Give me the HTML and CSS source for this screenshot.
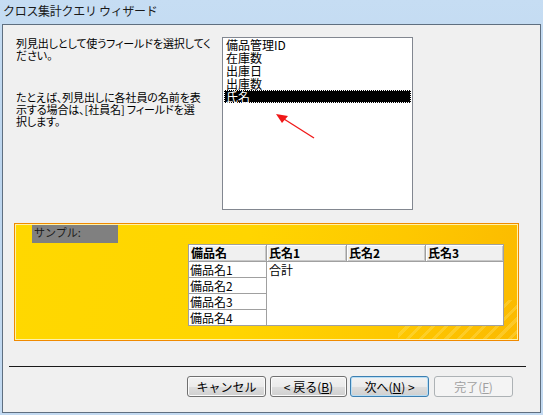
FILE: index.html
```html
<!DOCTYPE html>
<html lang="ja">
<head>
<meta charset="utf-8">
<title>クロス集計クエリ ウィザード</title>
<link rel="stylesheet" href="styles.css">
</head>
<body>
<div class="window">
  <div class="titlebar">クロス集計クエリ ウィザード</div>
  <div class="client">
    <div class="top">
      <div class="desc">
        <p class="para">列見出しとして使うフィールドを選択してく<br>ださい。</p>
        <p class="para para2">たとえば、列見出しに各社員の名前を表<br>示する場合は、[社員名] フィールドを選<br>択します。</p>
      </div>
      <div class="listbox">
        <div class="item">備品管理ID</div>
        <div class="item">在庫数</div>
        <div class="item">出庫日</div>
        <div class="item">出庫数</div>
        <div class="item selected">氏名</div>
        <svg class="arrow" width="50" height="34" viewBox="0 0 50 34">
          <line x1="46" y1="28" x2="16" y2="9" stroke="#f01818" stroke-width="1.3"/>
          <polygon points="8,4 20,6 14,13" fill="#f01818"/>
        </svg>
      </div>
    </div>
    <div class="sample">
      <div class="label">サンプル:</div>
      <div class="tbl">
        <div class="hd">備品名</div>
        <div class="hd">氏名1</div>
        <div class="hd">氏名2</div>
        <div class="hd">氏名3</div>
        <div class="cell">備品名1</div>
        <div class="body">合計</div>
        <div class="cell">備品名2</div>
        <div class="cell">備品名3</div>
        <div class="cell">備品名4</div>
      </div>
    </div>
    <div class="sep"></div>
    <div class="buttons">
      <button class="btn">キャンセル</button>
      <button class="btn w77">&lt; 戻る(<u>B</u>)</button>
      <button class="btn focus">次へ(<u>N</u>) &gt;</button>
      <button class="btn disabled gap5" disabled>完了(<u>F</u>)</button>
    </div>
  </div>
</div>
</body>
</html>
```

FILE: styles.css
```css
* { box-sizing: border-box; }
html, body {
  margin: 0;
  padding: 0;
}
body {
  width: 543px;
  height: 415px;
  overflow: hidden;
  font-family: "Noto Sans CJK JP", "Noto Sans", sans-serif;
  font-size: 12px;
  color: #000;
  background: #bcd6f0;
}
.window {
  width: 543px;
  height: 415px;
  display: flex;
  flex-direction: column;
  padding: 0 2px 2px 2px;
  background: linear-gradient(180deg, #c6ddf3 0%, #bcd5ee 40%, #c3daf1 100%);
}
.titlebar {
  height: 24px;
  flex: none;
  padding: 3px 0 0 1px;
  font-size: 12px;
  line-height: 16px;
  color: #1a1a1a;
  letter-spacing: -0.3px;
}
.client {
  flex: 1;
  border: 1px solid #5f6f80;
  background: #f0f0f0;
  display: flex;
  flex-direction: column;
}
.top {
  display: flex;
  padding: 12px 0 0 13px;
}
.desc {
  width: 206px;
  flex: none;
  white-space: nowrap;
  font-feature-settings: "palt";
  font-size: 11px;
  line-height: 12px;
  letter-spacing: -0.1px;
}
.para {
  margin: 0;
}
.para2 {
  margin-top: 30px;
}
.listbox {
  position: relative;
  width: 191px;
  height: 173px;
  background: #fff;
  border: 1px solid #828790;
  padding: 0 1px;
}
.item {
  height: 13px;
  line-height: 13px;
  padding-left: 2px;
  white-space: nowrap;
}
.item.selected {
  background: #000;
  color: #fff;
  outline: 1px dotted #fff;
  outline-offset: -1px;
}
.arrow {
  position: absolute;
  left: 45px;
  top: 72px;
}
.sample {
  margin: 13px 0 0 11px;
  width: 505px;
  height: 118px;
  border: 1px solid #f08a00;
  box-shadow: inset 0 0 0 1px #fff2a8;
  background:
    repeating-linear-gradient(135deg, rgba(255,255,255,0) 0 6px, rgba(255,240,150,0.25) 6px 9px) right bottom / 120px 40px no-repeat,
    linear-gradient(100deg, #ffd800 0%, #ffd500 45%, #fec800 75%, #fbba00 100%);
  padding: 1px 0 0 17px;
}
.label {
  width: 86px;
  height: 18px;
  background: #808080;
  color: #1a1a1a;
  padding: 0 0 0 2px;
  line-height: 14px;
  font-size: 11px;
}
.tbl {
  margin: 1px 0 0 156px;
  width: 316px;
  display: grid;
  grid-template-columns: 77px 79px 78px 77px;
  grid-template-rows: 16px repeat(4, 15px);
  gap: 1px;
  padding: 1px;
  background: #a0a0a0;
}
.hd {
  background: #f0f0f0;
  box-shadow: inset 1px 1px #fff, inset -1px -1px #c8c8c8;
  font-weight: bold;
  line-height: 16px;
  padding-left: 2px;
}
.cell {
  background: #fff;
  line-height: 15px;
  padding-left: 1px;
  white-space: nowrap;
}
.body {
  background: #fff;
  grid-column: 2 / 5;
  grid-row: 2 / 6;
  line-height: 15px;
  padding-left: 2px;
}
.sep {
  margin: 25px 0 0 6px;
  width: 517px;
  height: 1px;
  background: #1a1a1a;
}
.buttons {
  display: flex;
  margin: 9px 0 0 184px;
  gap: 4px;
}
.btn {
  width: 79px;
  height: 21px;
  padding: 0;
  font-family: "Noto Sans CJK JP", "Noto Sans", sans-serif;
  font-size: 12px;
  line-height: 17px;
  color: #000;
  border: 1px solid #707070;
  border-radius: 3px;
  background: linear-gradient(180deg, #f2f2f2 0%, #ebebeb 50%, #dddddd 51%, #cfcfcf 100%);
  box-shadow: inset 0 0 0 1px #fbfbfb;
}
.btn.w77 { width: 77px; }
.btn.focus {
  margin-left: -1px;
  border-color: #3c7fb1;
  box-shadow: inset 0 0 0 1px #b8def5;
}
.btn.disabled {
  color: #a0a0a0;
  border-color: #adb2b5;
  background: #f4f4f4;
  box-shadow: none;
}
.btn.gap5 { margin-left: 1px; }
```
